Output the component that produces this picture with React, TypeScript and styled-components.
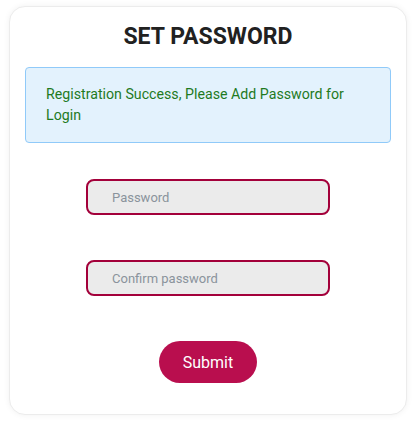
import React from 'react';
import styled, { createGlobalStyle } from 'styled-components';

const GlobalStyle = createGlobalStyle`
  body {
    margin: 0;
    background: #ffffff;
    font-family: Roboto, "Liberation Sans", Arial, sans-serif;
  }
`;

const Page = styled.div`
  padding: 6px 8px 11px 9px;
`;

const Card = styled.div`
  display: flex;
  flex-direction: column;
  align-items: center;
  padding: 14px 15px 31px;
  background: #fff;
  border: 1px solid #ececec;
  border-radius: 16px;
  box-shadow: 0 0 6px rgba(0, 0, 0, 0.06);
`;

const Title = styled.h1`
  margin: 0;
  font-size: 23px;
  line-height: 31px;
  font-weight: 700;
  color: #212121;
`;

const Alert = styled.div`
  align-self: stretch;
  margin-top: 15px;
  padding: 16px 20px;
  background: #e3f2fd;
  border: 1px solid #90caf9;
  border-radius: 4px;
  color: #1f7a1f;
  font-size: 14.2px;
  line-height: 21px;
`;

const Form = styled.form`
  display: flex;
  flex-direction: column;
  align-items: center;
  gap: 45px;
  margin-top: 36px;
`;

const Input = styled.input`
  box-sizing: border-box;
  width: 244px;
  height: 36px;
  padding: 0 0 0 24px;
  background: #ebebeb;
  border: 2px solid #a3003a;
  border-radius: 8px;
  font-family: inherit;
  font-size: 13px;
  color: #333;
  outline: none;

  &::placeholder {
    color: #8a939c;
  }
`;

const SubmitButton = styled.button`
  width: 98px;
  height: 42px;
  border: none;
  border-radius: 21px;
  background: #b90e4e;
  color: #fff;
  font-family: inherit;
  font-size: 16px;
  cursor: pointer;
`;

export default function App() {
  return (
    <>
      <GlobalStyle />
      <Page>
        <Card>
          <Title>SET PASSWORD</Title>
          <Alert>Registration Success, Please Add Password for Login</Alert>
          <Form onSubmit={(e) => e.preventDefault()}>
            <Input type="password" placeholder="Password" />
            <Input type="password" placeholder="Confirm password" />
            <SubmitButton type="submit">Submit</SubmitButton>
          </Form>
        </Card>
      </Page>
    </>
  );
}
